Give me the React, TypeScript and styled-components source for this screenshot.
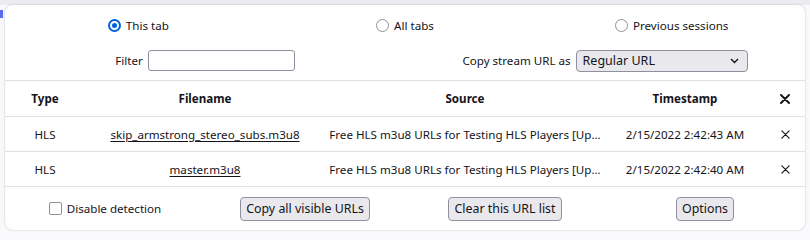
import React from "react";
import styled, { createGlobalStyle } from "styled-components";

const GlobalStyle = createGlobalStyle`
  html, body {
    margin: 0;
    padding: 0;
    background: #f9f9fb;
  }
  body {
    font-family: "Noto Sans", "Open Sans", sans-serif;
    font-size: 11.6px;
    color: #15141a;
  }
`;

const Backdrop = styled.div`
  position: relative;
  width: 810px;
  height: 235px;
  box-sizing: border-box;
  padding: 5px 5px 5px 5px;
  background: linear-gradient(#ececf0 0, #ececf0 5px, #f9f9fb 5px);
  overflow: hidden;
`;

const PageMark = styled.div`
  position: absolute;
  left: 0;
  top: 10px;
  width: 3px;
  height: 8px;
  background: #5b6cf0;
`;

const Panel = styled.div`
  position: relative;
  height: 225px;
  box-sizing: border-box;
  background: #ffffff;
  border-radius: 8px;
  box-shadow: 0 0 2px rgba(0, 0, 0, 0.25);
  display: flex;
  flex-direction: column;
`;

const RadioRow = styled.div`
  display: grid;
  grid-template-columns: repeat(3, 1fr);
  align-items: center;
  height: 40px;
`;

const Choice = styled.label`
  display: flex;
  align-items: center;
  justify-content: center;
  gap: 5px;
`;

const RadioDot = styled.span<{ $checked?: boolean }>`
  width: 13px;
  height: 13px;
  box-sizing: border-box;
  border-radius: 50%;
  border-style: solid;
  border-color: ${(p) => (p.$checked ? "#0061e0" : "#8f8f9d")};
  border-width: ${(p) => (p.$checked ? "2px" : "1.5px")};
  display: flex;
  align-items: center;
  justify-content: center;

  &::after {
    content: "";
    width: 5px;
    height: 5px;
    border-radius: 50%;
    background: ${(p) => (p.$checked ? "#0061e0" : "transparent")};
  }
`;

const FilterRow = styled.div`
  display: grid;
  grid-template-columns: 1fr 1fr;
  align-items: center;
  height: 36px;
  box-sizing: border-box;
  padding-bottom: 4px;
  border-bottom: 1px solid #e0e0e6;
`;

const Field = styled.div`
  display: flex;
  align-items: center;
  justify-content: center;
  gap: 5px;
`;

const TextBox = styled.div`
  width: 147px;
  height: 21px;
  box-sizing: border-box;
  border: 1px solid #8f8f9d;
  border-radius: 3px;
  background: #fff;
`;

const Select = styled.div`
  width: 172px;
  height: 22px;
  box-sizing: border-box;
  border: 1px solid #8f8f9d;
  border-radius: 4px;
  background: #e9e9ed;
  display: flex;
  align-items: center;
  justify-content: space-between;
  padding: 0 8px 0 6px;
  font-size: 12.5px;
`;

const GRID = "80px 240px 280px 160px 1fr";

const TableRow = styled.div<{ $head?: boolean }>`
  display: grid;
  grid-template-columns: ${GRID};
  align-items: center;
  height: ${(p) => (p.$head ? "35px" : "34px")};
  border-bottom: 1px solid #e0e0e6;
  font-weight: ${(p) => (p.$head ? 700 : 400)};
`;

const Cell = styled.div`
  text-align: center;
  white-space: nowrap;
  overflow: hidden;
  display: flex;
  justify-content: center;
  align-items: center;
`;

const FileLink = styled.span`
  text-decoration: underline;
  text-underline-offset: 2px;
`;

const Footer = styled.div`
  display: grid;
  grid-template-columns: repeat(4, 1fr);
  align-items: center;
  flex: 1;
`;

const CheckBox = styled.span`
  width: 13px;
  height: 13px;
  box-sizing: border-box;
  border: 1.5px solid #8f8f9d;
  border-radius: 2px;
`;

const Button = styled.button`
  justify-self: center;
  height: 24px;
  box-sizing: border-box;
  padding: 0 5px;
  border: 1px solid #8f8f9d;
  border-radius: 4px;
  background: #e9e9ed;
  color: #15141a;
  font-family: inherit;
  font-size: 12.4px;
`;

function CloseIcon({ bold }: { bold?: boolean }) {
  const s = bold ? 10 : 9;
  return (
    <svg width={s} height={s} viewBox="0 0 10 10">
      <path
        d="M1 1 L9 9 M9 1 L1 9"
        stroke="#15141a"
        strokeWidth={bold ? 1.9 : 1.3}
        strokeLinecap="round"
      />
    </svg>
  );
}

function Chevron() {
  return (
    <svg width="9" height="6" viewBox="0 0 9 6">
      <path d="M1 1 L4.5 4.5 L8 1" stroke="#15141a" strokeWidth="1.4" fill="none" />
    </svg>
  );
}

interface Stream {
  type: string;
  file: string;
  source: string;
  time: string;
}

const streams: Stream[] = [
  {
    type: "HLS",
    file: "skip_armstrong_stereo_subs.m3u8",
    source: "Free HLS m3u8 URLs for Testing HLS Players [Up...",
    time: "2/15/2022 2:42:43 AM",
  },
  {
    type: "HLS",
    file: "master.m3u8",
    source: "Free HLS m3u8 URLs for Testing HLS Players [Up...",
    time: "2/15/2022 2:42:40 AM",
  },
];

export default function App() {
  return (
    <>
      <GlobalStyle />
      <Backdrop>
        <PageMark />
        <Panel>
          <RadioRow>
            <Choice>
              <RadioDot $checked />
              This tab
            </Choice>
            <Choice>
              <RadioDot />
              All tabs
            </Choice>
            <Choice>
              <RadioDot />
              Previous sessions
            </Choice>
          </RadioRow>
          <FilterRow>
            <Field>
              Filter
              <TextBox />
            </Field>
            <Field>
              Copy stream URL as
              <Select>
                Regular URL
                <Chevron />
              </Select>
            </Field>
          </FilterRow>
          <TableRow $head>
            <Cell>Type</Cell>
            <Cell>Filename</Cell>
            <Cell>Source</Cell>
            <Cell>Timestamp</Cell>
            <Cell>
              <CloseIcon bold />
            </Cell>
          </TableRow>
          {streams.map((s) => (
            <TableRow key={s.file}>
              <Cell>{s.type}</Cell>
              <Cell>
                <FileLink>{s.file}</FileLink>
              </Cell>
              <Cell>{s.source}</Cell>
              <Cell>{s.time}</Cell>
              <Cell>
                <CloseIcon />
              </Cell>
            </TableRow>
          ))}
          <Footer>
            <Choice>
              <CheckBox />
              Disable detection
            </Choice>
            <Button>Copy all visible URLs</Button>
            <Button>Clear this URL list</Button>
            <Button>Options</Button>
          </Footer>
        </Panel>
      </Backdrop>
    </>
  );
}
